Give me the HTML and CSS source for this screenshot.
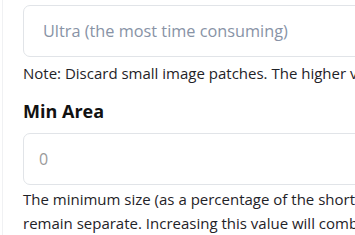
FILE: index.html
```html
<!DOCTYPE html>
<html>
<head>
<meta charset="utf-8">
<link rel="stylesheet" href="styles.css">
</head>
<body>
<div class="panel">
  <div class="field first">
    <div class="select">Ultra (the most time consuming)</div>
    <p class="note">Note: Discard small image patches. The higher value the better quality.</p>
  </div>
  <div class="field second">
    <h3 class="label">Min Area</h3>
    <div class="input">0</div>
    <p class="note">The minimum size (as a percentage of the shortest side) of image patches that remain separate. Increasing this value will combine smaller patches.</p>
  </div>
</div>
</body>
</html>
```
FILE: styles.css
```css
html, body {
  margin: 0;
  padding: 0;
  background: #ffffff;
  overflow: hidden;
}
body {
  width: 355px;
  height: 235px;
  font-family: "Open Sans", "Liberation Sans", sans-serif;
  color: #1f2328;
}
.panel {
  margin-left: 2px;
  border-left: 1px solid #f0f1f3;
  padding: 5px 0 0 20px;
  width: 600px;
  height: 230px;
}
.field {
  display: flex;
  flex-direction: column;
}
.select, .input {
  box-sizing: border-box;
  height: 52px;
  border: 1px solid #e1e4e8;
  border-radius: 7px;
  display: flex;
  align-items: center;
  font-size: 16px;
  white-space: nowrap;
}
.select {
  padding-left: 19px;
  font-size: 16.3px;
  color: #8893a6;
}
.input {
  padding-left: 15px;
  color: #9a9a9a;
}
.note {
  margin: 0;
  font-size: 15px;
  line-height: 24px;
}
.first .note {
  margin-top: 4px;
  white-space: nowrap;
}
.label {
  margin: 14px 0 10px;
  font-size: 18px;
  font-weight: 700;
  line-height: 24px;
  color: #111;
}
.second .note {
  margin-top: 2px;
  width: 575px;
}
```
